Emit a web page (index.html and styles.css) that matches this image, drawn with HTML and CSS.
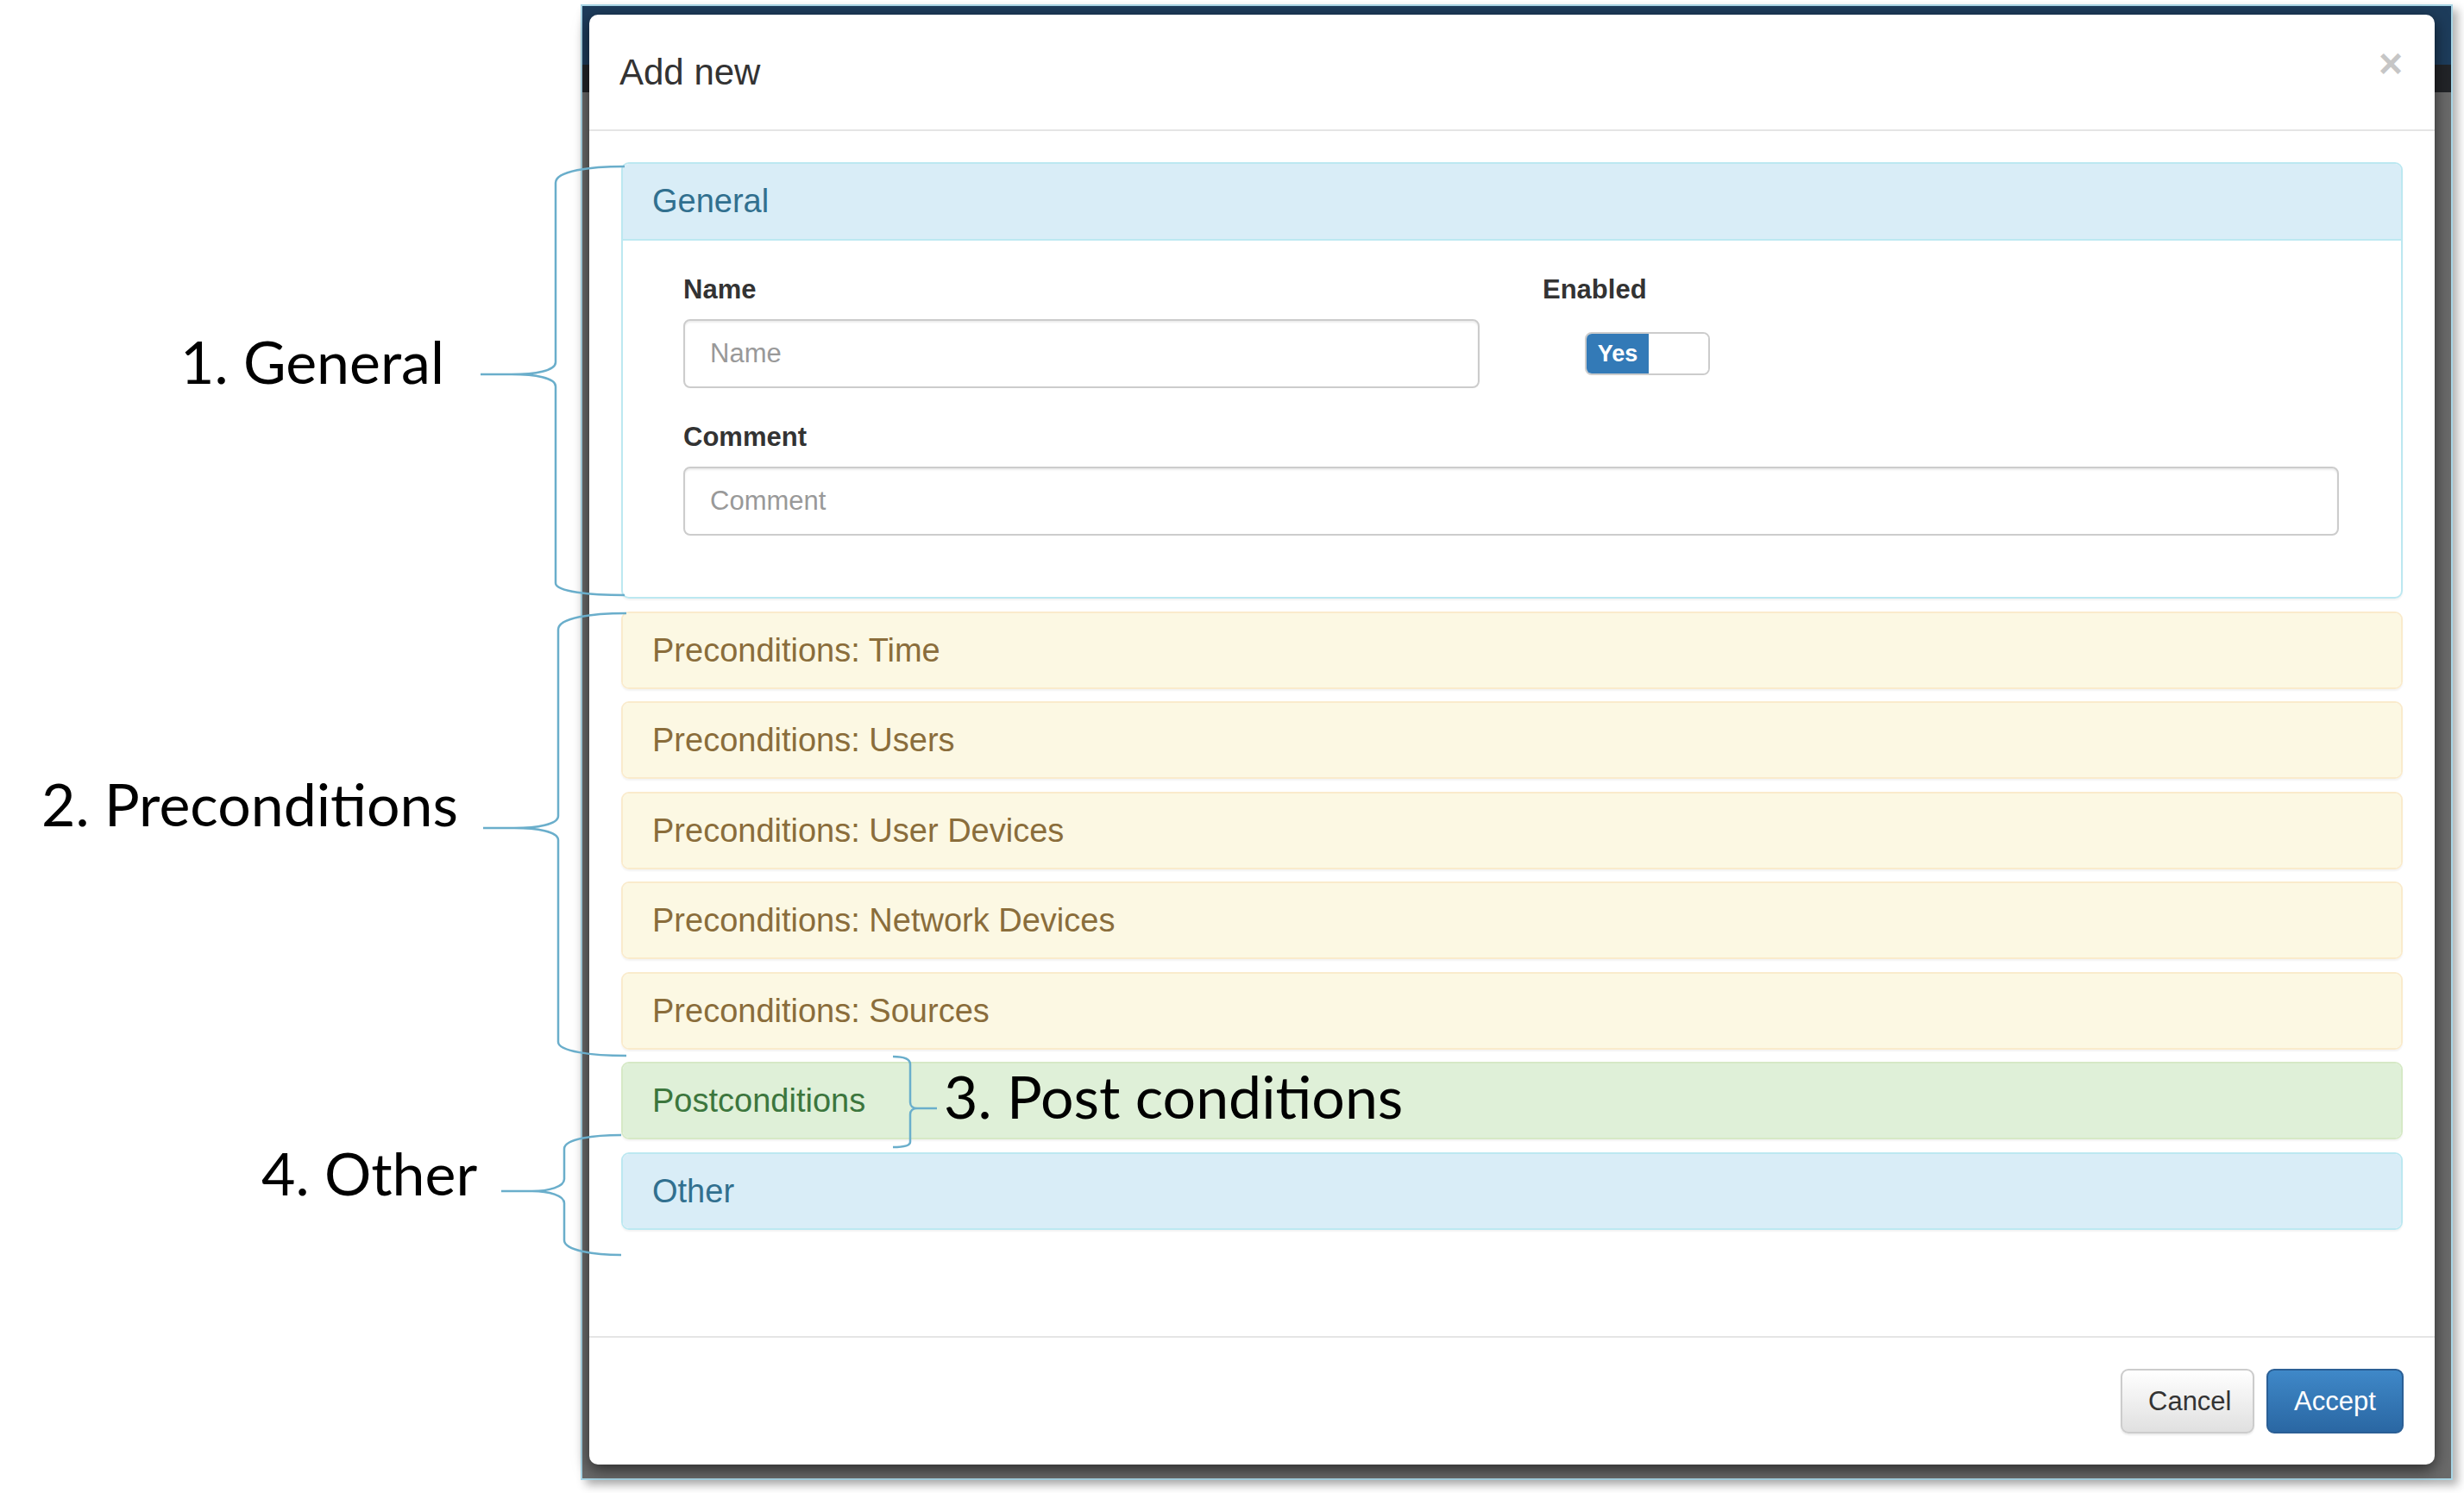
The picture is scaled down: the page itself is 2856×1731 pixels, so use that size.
FILE: index.html
```html
<!DOCTYPE html>
<html lang="en">
<head>
    <meta charset="UTF-8">
    <title>Add new</title>
    <link rel="stylesheet" href="styles.css">
</head>
<body>
    <div class="stage">
        <div class="frame">
            <div class="modal">
                <div class="modal-header">
                    <h4 class="modal-title">Add new</h4>
                    <span class="close">&times;</span>
                </div>

                <div class="modal-body">
                    <div class="panel panel-info panel-open">
                        <div class="panel-heading">General</div>
                        <div class="panel-body">
                            <div class="form-row">
                                <div class="form-group">
                                    <label>Name</label>
                                    <input class="form-control" type="text" placeholder="Name">
                                </div>
                                <div class="form-group">
                                    <label>Enabled</label>
                                    <div class="switch">
                                        <span class="switch-on">Yes</span>
                                        <span class="switch-off"></span>
                                    </div>
                                </div>
                            </div>
                            <div class="form-group">
                                <label>Comment</label>
                                <input class="form-control" type="text" placeholder="Comment">
                            </div>
                        </div>
                    </div>
                    <div class="panel panel-warning"><div class="panel-heading">Preconditions: Time</div></div>
                    <div class="panel panel-warning"><div class="panel-heading">Preconditions: Users</div></div>
                    <div class="panel panel-warning"><div class="panel-heading">Preconditions: User Devices</div></div>
                    <div class="panel panel-warning"><div class="panel-heading">Preconditions: Network Devices</div></div>
                    <div class="panel panel-warning"><div class="panel-heading">Preconditions: Sources</div></div>
                    <div class="panel panel-success"><div class="panel-heading">Postconditions</div></div>
                    <div class="panel panel-info"><div class="panel-heading">Other</div></div>
                </div>

                <div class="modal-footer">
                    <button class="btn btn-default">Cancel</button>
                    <button class="btn btn-primary">Accept</button>
                </div>
            </div>
        </div>

        <!-- callouts drawn over the screenshot -->
        <svg class="braces" width="2856" height="1731" viewBox="0 0 2856 1731">
            <path d="M724,193 C684,193 644,198 644,212 L644,420 C644,430 620,434 593,434 L557,434 M593,434 C620,434 644,438 644,448 L644,676 C644,686 684,690 724,690"/>
            <path d="M726,711 C686,711 647,716 647,730 L647,946 C647,956 622,960 596,960 L560,960 M596,960 C622,960 647,964 647,974 L647,1208 C647,1219 686,1224 726,1224"/>
            <path d="M1035,1225 C1048,1225 1055,1228 1055,1234 L1055,1278 C1055,1282 1058,1285 1063,1285 L1086,1285 M1063,1285 C1058,1285 1055,1288 1055,1292 L1055,1324 C1055,1328 1048,1330 1035,1330"/>
            <path d="M720,1316 C690,1316 654,1320 654,1332 L654,1367 C654,1376 636,1381 617,1381 L581,1381 M617,1381 C636,1381 654,1386 654,1395 L654,1438 C654,1450 690,1455 720,1455"/>
        </svg>
        <div class="note note-general">1. General</div>
        <div class="note note-pre">2. Preconditions</div>
        <div class="note note-post">3. Post conditions</div>
        <div class="note note-other">4. Other</div>
    </div>
</body>
</html>
```

FILE: styles.css
```css
body{
    margin: 0;
    background: #fff;
    font-family: "Liberation Sans", Arial, sans-serif;
    color: #333;
}
.stage{
    position: relative;
    width: 2856px;
    height: 1731px;
    overflow: hidden;
}
.frame{
    margin: 5px 0 0 673px;
    width: 2139px;
    border: 2px solid #a9d6e6;
    padding: 10px 19px 16px 8px;
    background: linear-gradient(to bottom, #1d3c5b 0, #1d3c5b 68px, #222428 68px, #222428 100px, #6a6a6a 100px);
    box-shadow: 6px 6px 10px rgba(0,0,0,.3);
}
.modal{
    background: #fff;
    border-radius: 10px;
    box-shadow: 0 6px 18px rgba(0,0,0,.6);
}
.modal-header{
    display: flex;
    align-items: center;
    justify-content: space-between;
    height: 133px;
    padding: 0 37px 0 35px;
    border-bottom: 2px solid #e5e5e5;
}
.modal-title{
    margin: 0;
    font-size: 42px;
    line-height: 1;
    font-weight: normal;
    color: #333;
}
.close{
    align-self: flex-start;
    margin-top: 33px;
    font-size: 48px;
    line-height: 1;
    font-weight: bold;
    color: #c6c6c6;
}
.modal-body{
    padding: 36px 37px 123.5px;
}
.panel{
    border: 2px solid transparent;
    border-radius: 9px;
    margin-top: 14.5px;
    box-shadow: 0 2px 2px rgba(0,0,0,.05);
}
.panel:first-child{
    margin-top: 0;
}
.panel-heading{
    height: 86px;
    line-height: 86px;
    padding: 0 34px;
    font-size: 38px;
    border-radius: 7px;
}
.panel-open .panel-heading{
    height: 87px;
    line-height: 87px;
    border-bottom: 2px solid #bce8f1;
    border-radius: 7px 7px 0 0;
}
.panel-info{
    border-color: #bce8f1;
}
.panel-info .panel-heading{
    background: #d9edf7;
    color: #31708f;
}
.panel-warning{
    border-color: #faebcc;
}
.panel-warning .panel-heading{
    background: #fcf8e3;
    color: #8a6d3b;
}
.panel-success{
    border-color: #d6e9c6;
}
.panel-success .panel-heading{
    background: #dff0d8;
    color: #3c763d;
}
.panel-body{
    padding: 34.5px 72px 71px 70px;
}
.form-row{
    display: grid;
    grid-template-columns: 1fr 1fr;
    column-gap: 73px;
}
.form-group{
    margin-bottom: 34.5px;
}
.panel-body > .form-group{
    margin-bottom: 0;
}
.form-group label{
    display: block;
    font-size: 31px;
    line-height: 44px;
    font-weight: bold;
    color: #333;
    margin-bottom: 12.5px;
}
.form-control{
    display: block;
    box-sizing: border-box;
    width: 100%;
    height: 80px;
    padding: 0 29px;
    border: 2px solid #ccc;
    border-radius: 8px;
    font-family: inherit;
    font-size: 31px;
    color: #555;
    box-shadow: inset 0 2px 2px rgba(0,0,0,.075);
}
.form-control::placeholder{
    color: #999;
}
.switch{
    display: flex;
    box-sizing: border-box;
    width: 145px;
    height: 50px;
    margin: 27.5px 0 0 49px;
    border: 2px solid #ccc;
    border-radius: 8px;
    overflow: hidden;
}
.switch-on{
    width: 72px;
    background: #337ab7;
    color: #fff;
    font-size: 27px;
    font-weight: bold;
    line-height: 46px;
    text-align: center;
}
.switch-off{
    flex: 1;
    background: #fff;
}
.modal-footer{
    display: flex;
    justify-content: flex-end;
    gap: 14px;
    padding: 36px 36px;
    border-top: 2px solid #e5e5e5;
}
.btn{
    height: 75px;
    padding: 0 30px;
    border: 2px solid #ccc;
    border-radius: 9px;
    font-family: inherit;
    font-size: 31px;
}
.btn-default{
    width: 155px;
    color: #333;
    background: linear-gradient(to bottom, #fff 0, #e0e0e0 100%);
    border-color: #ccc;
    box-shadow: 0 2px 2px rgba(0,0,0,.08);
}
.btn-primary{
    width: 159px;
    color: #fff;
    background: linear-gradient(to bottom, #3f88c8 0, #2a67a3 100%);
    border-color: #2b5f95;
}
.braces{
    position: absolute;
    left: 0;
    top: 0;
    pointer-events: none;
}
.braces path{
    fill: none;
    stroke: #6aaecb;
    stroke-width: 2.5;
}
.note{
    position: absolute;
    font-family: Lato, "Open Sans", sans-serif;
    font-size: 68px;
    line-height: 1;
    color: #000;
    white-space: nowrap;
}
.note-general{ left: 209px; top: 385px; }
.note-pre{ left: 48px; top: 898px; }
.note-post{ left: 1094px; top: 1237px; }
.note-other{ left: 303px; top: 1326px; }
```
